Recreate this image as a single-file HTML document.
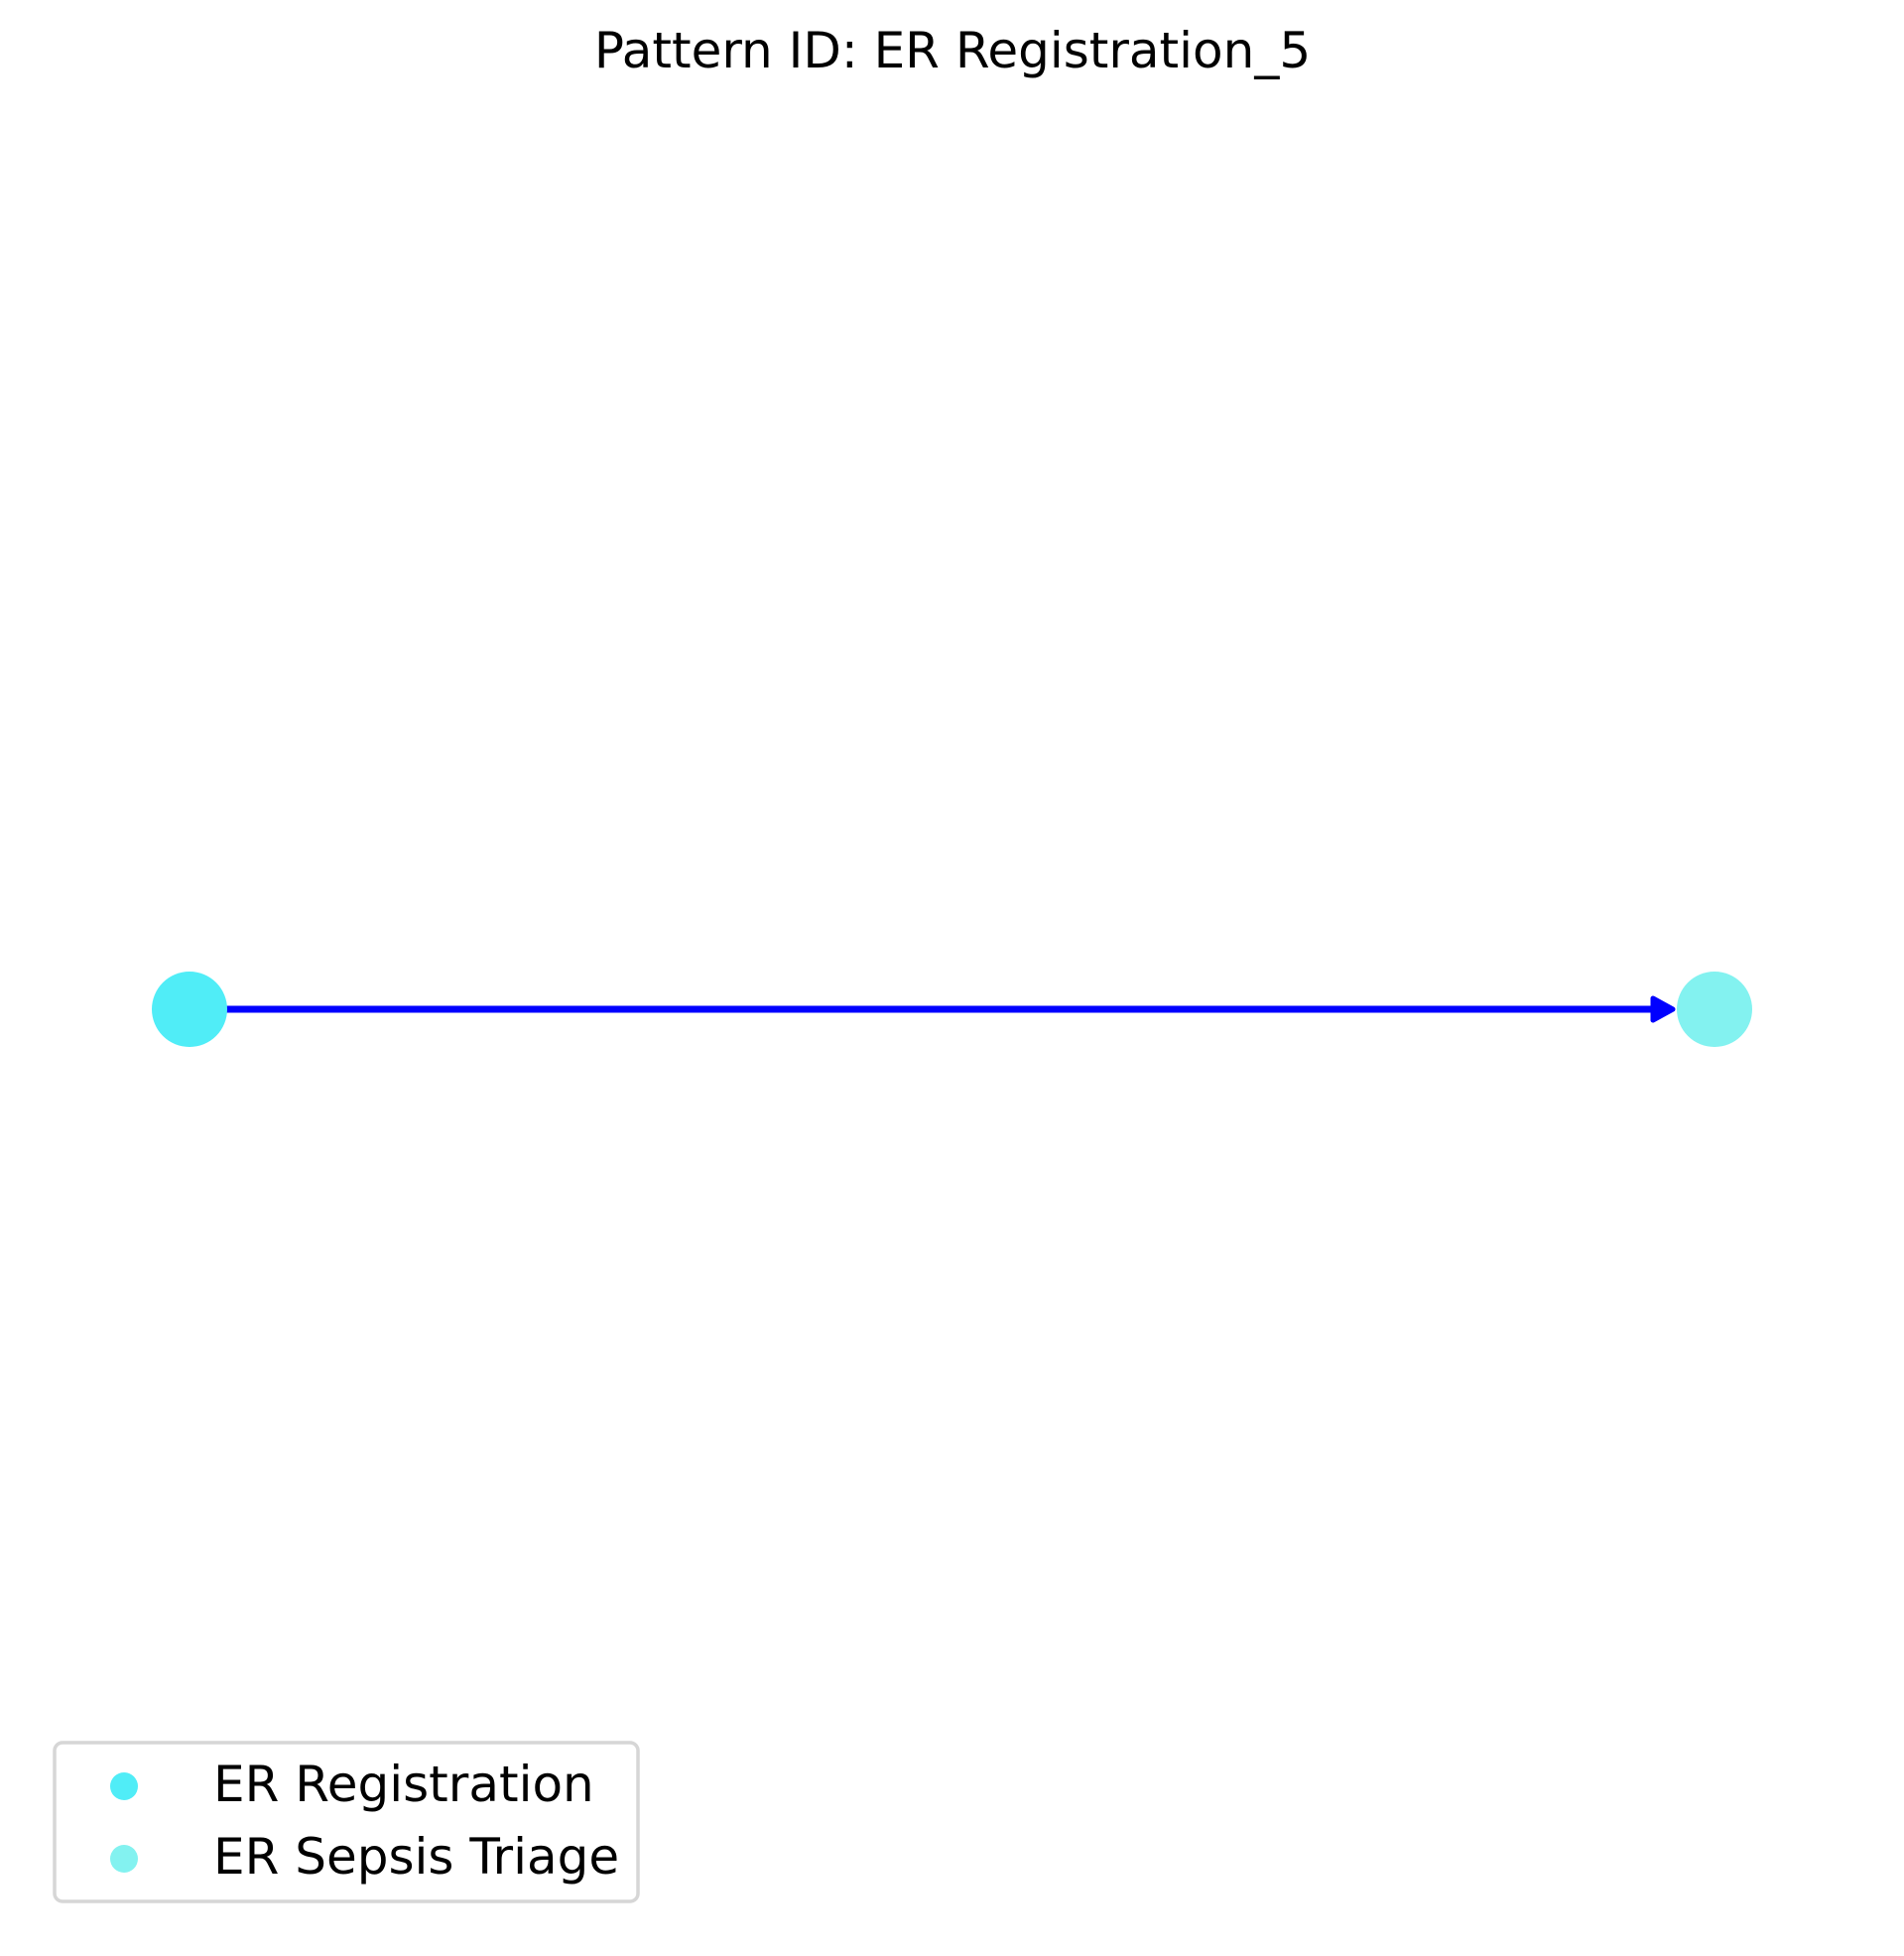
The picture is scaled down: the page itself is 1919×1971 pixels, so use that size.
<!DOCTYPE html>
<html><head><meta charset="utf-8"><style>
html,body{margin:0;padding:0;background:#fff;}
svg{display:block;}
text{font-family:"DejaVu Sans","Liberation Sans",sans-serif;fill:#000;}
</style></head><body>
<svg width="1919" height="1971" viewBox="0 0 1919 1971" xmlns="http://www.w3.org/2000/svg">
<rect width="1919" height="1971" fill="#fff"/>
<text x="960" y="68" font-size="50" text-anchor="middle">Pattern ID: ER Registration_5</text>
<line x1="228" y1="1017" x2="1670" y2="1017" stroke="#0000ff" stroke-width="7"/>
<path d="M1666 1006 L1686 1017 L1666 1028 Z" fill="#0000ff" stroke="#0000ff" stroke-width="5" stroke-linejoin="round"/>
<circle cx="191" cy="1017" r="38" fill="#50edf7"/>
<circle cx="1728" cy="1017" r="38" fill="#83f2f0"/>
<rect x="55" y="1756" width="588" height="160" rx="8" fill="#fff" stroke="#d6d6d6" stroke-width="3.5"/>
<ellipse cx="125" cy="1800" rx="14" ry="14" fill="#50edf7"/>
<ellipse cx="125" cy="1873" rx="14" ry="14" fill="#83f2f0"/>
<text x="215" y="1815" font-size="50">ER Registration</text>
<text x="215" y="1888" font-size="50">ER Sepsis Triage</text>
</svg>
</body></html>
